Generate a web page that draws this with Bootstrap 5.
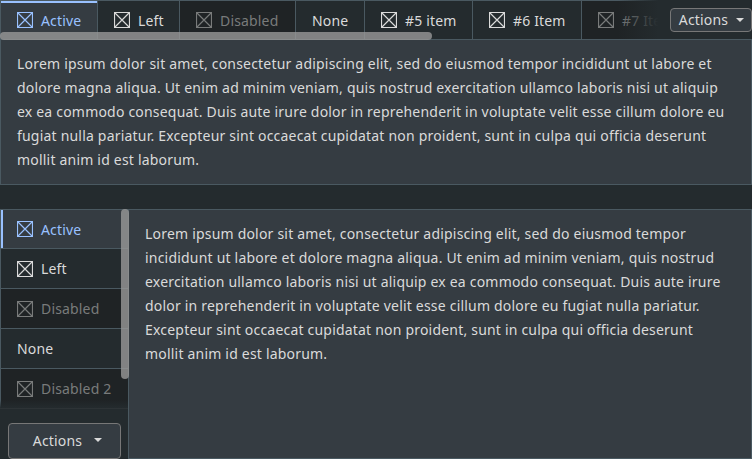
<!DOCTYPE html>
<html lang="en" data-bs-theme="dark">
<head>
<meta charset="utf-8">
<meta name="viewport" content="width=device-width, initial-scale=1">
<title>Tabs</title>
<link href="https://cdn.jsdelivr.net/npm/bootstrap@5.3.0/dist/css/bootstrap.min.css" rel="stylesheet">
<style>
:root{--line:#4a5961;--page:#242b2e;--panel:#353c42;--off:#1f2325;--accent:#99c1ff;--ink:#dadada}
body{background:var(--page);color:var(--ink);font:14px/24px "Noto Sans",sans-serif;letter-spacing:.16px;width:752px;height:459px;overflow:hidden}
.tabset-h{height:185px}
.tabset-v{height:250px;margin-top:24px}
.strip-h{height:39px}
.strip-h .nav-link{height:39px;border:solid var(--line);border-width:1px 1px 0 0;padding:0 0 0 16px;flex:none}
.strip-h .nav-link:first-child{border-left-width:1px;padding-left:16px;width:98px}
.strip-h .nav-link:nth-child(2){width:82px}
.strip-h .nav-link:nth-child(3){width:116px}
.strip-h .nav-link:nth-child(4){width:69px}
.strip-h .nav-link:nth-child(5){width:108px}
.strip-h .nav-link:nth-child(6){width:109px}
.strip-v{width:128px}
.tabs-v{height:199px}
.strip-v .nav-link{height:40px;border:solid var(--line);border-width:1px 0 0 1px;padding:0 0 0 16px}
.strip-v .nav-link:first-child{height:39px}
.strip-v .nav-link:first-child span{padding-top:2px}
.tabset .nav-link{color:var(--ink);border-radius:0;background:transparent;gap:8px;white-space:nowrap}
.tabset .nav-link.active{color:var(--accent);background:var(--panel)}
.tabset .nav-link.disabled{color:#797b7b;background:var(--off)}
.strip-h .active{box-shadow:inset 0 2px var(--accent)}
.strip-v .active{box-shadow:inset 2px 0 var(--accent)}
.strip-h .nav-link span{padding-top:2px}
.pane{background:var(--panel);border:1px solid var(--line);padding:12px 18px 12px 16px;letter-spacing:.2px}
.glyph{width:16px;height:16px;flex:none;fill:none;stroke:currentColor}
.thumb{background:rgba(153,153,153,.8);border-radius:4px}
.thumb-h{left:0;top:32px;width:432px;height:8px}
.thumb-v{left:121px;top:0;width:8px;height:170px}
.fade-h{left:618px;top:0;width:44px;height:39px;background:linear-gradient(90deg,transparent,var(--page) 92%)}
.fade-v{left:0;bottom:0;width:128px;height:8px;background:linear-gradient(transparent,var(--page))}
.actions{background:var(--panel);border:1px solid #777;border-radius:4px;color:var(--ink);font-size:14px;letter-spacing:.16px;padding:0}
.actions:hover{background:var(--panel);color:var(--ink)}
.side-end{width:90px;background:var(--page)}
.side-end .actions{width:82px;height:24px;line-height:22px;gap:8px;padding-left:1px}
.foot-v{height:51px;padding:14px 7px 0 8px;border-top:1px solid #2d3336}
.foot-v .actions{height:36px;width:113px;gap:12px;padding:0 0 2px 6px}
.caret{border:4px solid transparent;border-top-color:var(--ink);border-bottom:0}
</style>
<script src="https://cdn.jsdelivr.net/npm/bootstrap@5.3.0/dist/js/bootstrap.bundle.min.js"></script>
</head>
<body>
<svg class="d-none"><symbol id="box" viewBox="0 0 16 16"><path d="M.55.55h14.9v14.9H.55z" stroke-width="1.1"/><path d="M1 1l14 14M15 1L1 15" stroke-width="1.2"/></symbol></svg>
<section class="tabset tabset-h d-flex flex-column position-relative">
  <div class="strip-h d-flex justify-content-between">
    <nav class="nav flex-nowrap overflow-hidden flex-grow-1">
      <a class="nav-link active d-flex align-items-center"><svg class="glyph"><use href="#box"/></svg><span>Active</span></a>
      <a class="nav-link d-flex align-items-center"><svg class="glyph"><use href="#box"/></svg><span>Left</span></a>
      <a class="nav-link disabled d-flex align-items-center"><svg class="glyph"><use href="#box"/></svg><span>Disabled</span></a>
      <a class="nav-link d-flex align-items-center"><span>None</span></a>
      <a class="nav-link d-flex align-items-center"><svg class="glyph"><use href="#box"/></svg><span>#5 item</span></a>
      <a class="nav-link d-flex align-items-center"><svg class="glyph"><use href="#box"/></svg><span>#6 Item</span></a>
      <a class="nav-link disabled d-flex align-items-center"><svg class="glyph"><use href="#box"/></svg><span>#7 Item</span></a>
    </nav>
    <div class="side-end d-flex justify-content-end align-items-center flex-shrink-0">
      <button class="btn actions d-flex align-items-center justify-content-center">Actions<i class="caret"></i></button>
    </div>
  </div>
  <div class="pane flex-grow-1">Lorem ipsum dolor sit amet, consectetur adipiscing elit, sed do eiusmod tempor incididunt ut labore et dolore magna aliqua. Ut enim ad minim veniam, quis nostrud exercitation ullamco laboris nisi ut aliquip ex ea commodo consequat. Duis aute irure dolor in reprehenderit in voluptate velit esse cillum dolore eu fugiat nulla pariatur. Excepteur sint occaecat cupidatat non proident, sunt in culpa qui officia deserunt mollit anim id est laborum.</div>
  <div class="fade-h position-absolute"></div>
  <div class="thumb thumb-h position-absolute"></div>
</section>
<section class="tabset tabset-v d-flex position-relative">
  <div class="strip-v d-flex flex-column flex-shrink-0">
    <nav class="nav tabs-v flex-column flex-nowrap position-relative">
      <a class="nav-link active d-flex align-items-center"><svg class="glyph"><use href="#box"/></svg><span>Active</span></a>
      <a class="nav-link d-flex align-items-center"><svg class="glyph"><use href="#box"/></svg><span>Left</span></a>
      <a class="nav-link disabled d-flex align-items-center"><svg class="glyph"><use href="#box"/></svg><span>Disabled</span></a>
      <a class="nav-link d-flex align-items-center"><span>None</span></a>
      <a class="nav-link disabled d-flex align-items-center"><svg class="glyph"><use href="#box"/></svg><span>Disabled 2</span></a>
      <div class="fade-v position-absolute"></div>
    </nav>
    <div class="foot-v"><button class="btn actions d-flex align-items-center justify-content-center">Actions<i class="caret"></i></button></div>
  </div>
  <div class="pane flex-grow-1">Lorem ipsum dolor sit amet, consectetur adipiscing elit, sed do eiusmod tempor incididunt ut labore et dolore magna aliqua. Ut enim ad minim veniam, quis nostrud exercitation ullamco laboris nisi ut aliquip ex ea commodo consequat. Duis aute irure dolor in reprehenderit in voluptate velit esse cillum dolore eu fugiat nulla pariatur. Excepteur sint occaecat cupidatat non proident, sunt in culpa qui officia deserunt mollit anim id est laborum.</div>
  <div class="thumb thumb-v position-absolute"></div>
</section>
</body>
</html>
